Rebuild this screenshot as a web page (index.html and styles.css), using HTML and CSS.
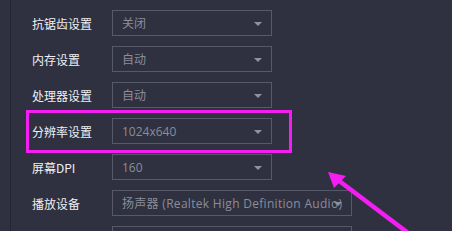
FILE: index.html
```html
<!DOCTYPE html>
<html lang="zh-CN">
<head>
<meta charset="utf-8">
<link rel="stylesheet" href="styles.css">
</head>
<body>
<div class="panel">
  <div class="row"><span class="label">抗锯齿设置</span><div class="select"><span class="value">关闭</span><span class="caret"></span></div></div>
  <div class="row"><span class="label">内存设置</span><div class="select"><span class="value">自动</span><span class="caret"></span></div></div>
  <div class="row"><span class="label">处理器设置</span><div class="select"><span class="value">自动</span><span class="caret"></span></div></div>
  <div class="row"><span class="label">分辨率设置</span><div class="select"><span class="value">1024x640</span><span class="caret"></span></div></div>
  <div class="row"><span class="label">屏幕DPI</span><div class="select"><span class="value">160</span><span class="caret"></span></div></div>
  <div class="row"><span class="label">播放设备</span><div class="select wide"><span class="value spaced">扬声器 (Realtek High Definition Audio)</span><span class="caret"></span></div></div>
  <div class="row"><span class="label"></span><div class="select wide"><span class="value"></span></div></div>
</div>
<div class="highlight"></div>
<svg class="arrow" width="452" height="231" viewBox="0 0 452 231">
  <line x1="338" y1="180" x2="420" y2="242" stroke="#f41ef4" stroke-width="4.5"/>
  <polygon points="328,172 346,176 334,188" fill="#f41ef4"/>
</svg>
</body>
</html>
```
FILE: styles.css
```css
html, body {
  margin: 0;
  padding: 0;
}
body {
  width: 452px;
  height: 231px;
  overflow: hidden;
  background: #2f3140;
  font-family: "Open Sans", "Noto Sans CJK SC", sans-serif;
  font-size: 12px;
  position: relative;
}
.panel {
  margin-left: 10px;
  border-left: 1px solid #23252f;
  height: 231px;
  overflow: hidden;
  padding: 10px 0 0 21px;
  box-sizing: border-box;
  display: flex;
  flex-direction: column;
  gap: 10px;
}
.row {
  display: flex;
  align-items: center;
  height: 26px;
  flex-shrink: 0;
}
.label {
  width: 80px;
  color: #f0f0f4;
  white-space: nowrap;
  font-family: "Noto Sans CJK SC", sans-serif;
}
.select {
  position: relative;
  width: 160px;
  height: 26px;
  box-sizing: border-box;
  border: 1px solid #565968;
  display: flex;
  align-items: center;
  padding-left: 9px;
  overflow: hidden;
}
.select.wide {
  width: 240px;
}
.value {
  color: #8b8d99;
  white-space: nowrap;
}
.value.spaced {
  letter-spacing: 0.3px;
}
.caret {
  position: absolute;
  right: 9px;
  top: 11px;
  width: 0;
  height: 0;
  border-left: 4px solid transparent;
  border-right: 4px solid transparent;
  border-top: 4px solid #8d91a2;
}
.highlight {
  position: absolute;
  left: 26px;
  top: 110px;
  width: 266px;
  height: 43px;
  box-sizing: border-box;
  border: 3px solid #f41ef4;
}
.arrow {
  position: absolute;
  left: 0;
  top: 0;
}
```
